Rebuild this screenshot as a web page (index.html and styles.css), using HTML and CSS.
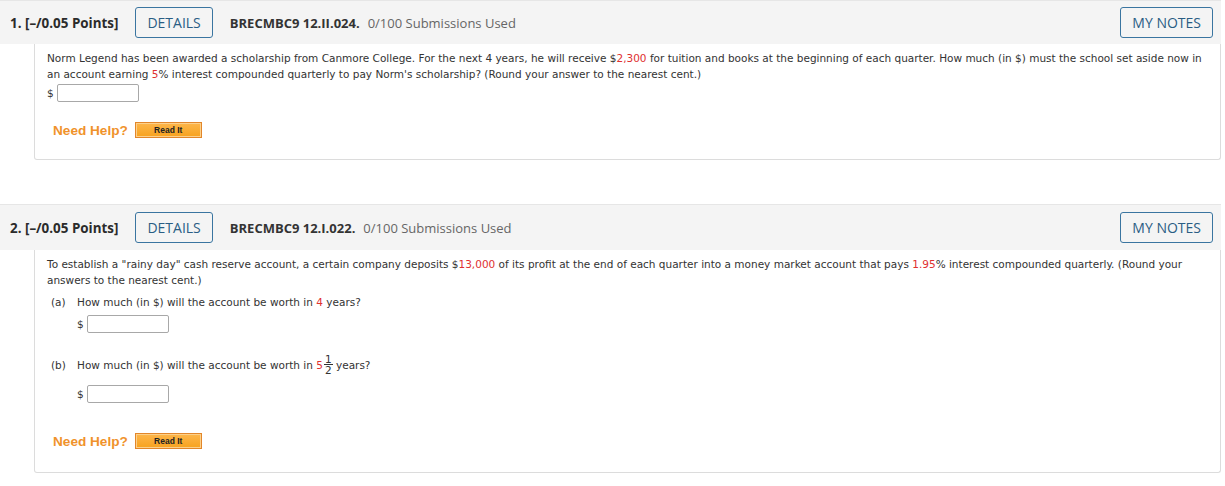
FILE: index.html
```html
<!DOCTYPE html>
<html>
<head>
<meta charset="utf-8">
<link rel="stylesheet" href="styles.css">
</head>
<body>
<div class="page">
  <section class="question">
    <div class="qhead">
      <span class="qnum">1. [–/0.05 Points]</span>
      <button class="btn">DETAILS</button>
      <span class="code">BRECMBC9 12.II.024.</span>
      <span class="subs">0/100 Submissions Used</span>
      <button class="btn notes">MY NOTES</button>
    </div>
    <div class="qbody">
      <p class="text">Norm Legend has been awarded a scholarship from Canmore College. For the next 4 years, he will receive $<span class="red">2,300</span> for tuition and books at the beginning of each quarter. How much (in $) must the school set aside now in an account earning <span class="red">5</span>% interest compounded quarterly to pay Norm's scholarship? (Round your answer to the nearest cent.)</p>
      <div class="answer">$ <span class="input"></span></div>
      <div class="help"><span class="needhelp">Need Help?</span><span class="readit">Read It</span></div>
    </div>
  </section>

  <section class="question second">
    <div class="qhead">
      <span class="qnum">2. [–/0.05 Points]</span>
      <button class="btn">DETAILS</button>
      <span class="code">BRECMBC9 12.I.022.</span>
      <span class="subs">0/100 Submissions Used</span>
      <button class="btn notes">MY NOTES</button>
    </div>
    <div class="qbody">
      <p class="text">To establish a "rainy day" cash reserve account, a certain company deposits $<span class="red">13,000</span> of its profit at the end of each quarter into a money market account that pays <span class="red">1.95</span>% interest compounded quarterly. (Round your answers to the nearest cent.)</p>
      <div class="part parta">
        <span class="plabel">(a)</span>
        <div class="pcontent">
          <div class="ptext">How much (in $) will the account be worth in <span class="red">4</span> years?</div>
          <div class="answer">$ <span class="input"></span></div>
        </div>
      </div>
      <div class="part partb">
        <span class="plabel">(b)</span>
        <div class="pcontent">
          <div class="ptext">How much (in $) will the account be worth in <span class="red">5</span><span class="frac"><span class="fnum">1</span><span class="fden">2</span></span> years?</div>
          <div class="answer">$ <span class="input"></span></div>
        </div>
      </div>
      <div class="help"><span class="needhelp">Need Help?</span><span class="readit">Read It</span></div>
    </div>
  </section>
</div>
</body>
</html>
```
FILE: styles.css
```css
html, body {
  margin: 0;
  padding: 0;
  background: #ffffff;
}
.page {
  width: 1221px;
}
.question.second {
  margin-top: 44px;
}
.qhead {
  display: flex;
  align-items: center;
  height: 43px;
  background: #f4f4f4;
  border-top: 1px solid #e6e6e6;
  padding: 0 8px 0 10px;
  font-family: "Open Sans", sans-serif;
  font-size: 13px;
  color: #333;
}
.second .qhead {
  height: 45px;
}
.qnum {
  font-weight: 700;
  font-size: 13.4px;
  color: #2b2b2b;
}
.btn {
  font-family: "Open Sans", sans-serif;
  font-size: 14px;
  color: #2a5d84;
  background: #f4f4f4;
  border: 1px solid #3a75a0;
  border-radius: 3px;
  height: 31px;
  padding: 0 11px;
  margin-left: 17px;
  cursor: pointer;
}
.code {
  font-weight: 700;
  margin-left: 17px;
  color: #333;
}
.subs {
  margin-left: 8px;
  color: #666;
}
.notes {
  margin-left: auto;
}
.qbody {
  margin-left: 34px;
  border: 1px solid #dcdcdc;
  border-top: none;
  border-radius: 0 0 3px 3px;
  padding: 6px 12px 21px 12px;
  font-family: "DejaVu Sans", Verdana, sans-serif;
  font-size: 10.5px;
  color: #333;
}
.text {
  margin: 0;
  line-height: 16px;
}
.red {
  color: #e03030;
}
.answer {
  display: flex;
  align-items: center;
  gap: 3px;
  margin-top: 1px;
  height: 19px;
}
.input {
  display: inline-block;
  width: 80px;
  height: 16px;
  border: 1px solid #a8a8a8;
  border-radius: 2px;
  background: #fff;
}
.help {
  display: flex;
  align-items: center;
  margin-top: 20px;
  margin-left: 6px;
}
.needhelp {
  font-family: "Liberation Sans", Arial, sans-serif;
  font-weight: 700;
  font-size: 13.6px;
  color: #f0922b;
}
.readit {
  display: inline-block;
  margin-left: 7px;
  width: 65px;
  height: 14px;
  line-height: 14px;
  text-align: center;
  font-family: "Liberation Sans", Arial, sans-serif;
  font-weight: 700;
  font-size: 8.5px;
  color: #222;
  background: linear-gradient(#fdb64b, #f7a21e);
  border: 1px solid #e2862a;
  box-shadow: inset 0 0 0 1px #fcd08a;
}
.part {
  display: flex;
  align-items: baseline;
  margin-left: 4px;
}
.parta {
  margin-top: 6px;
}
.plabel {
  width: 26px;
  line-height: 16px;
}
.pcontent {
  display: flex;
  flex-direction: column;
}
.ptext {
  line-height: 16px;
}
.parta .answer {
  margin-top: 4px;
}
.partb {
  margin-top: 22px;
}
.partb .answer {
  margin-top: 8px;
}
.frac {
  display: inline-flex;
  flex-direction: column;
  align-items: center;
  vertical-align: middle;
  font-size: 10.5px;
  line-height: 10px;
  margin-left: 1px;
  position: relative;
  top: -1px;
}
.fnum {
  border-bottom: 1px solid #333;
  padding: 0 1px;
}
.fden {
  padding: 0 1px;
}
.second .help {
  margin-top: 30px;
}
.second .qbody {
  padding-bottom: 23px;
}
```
